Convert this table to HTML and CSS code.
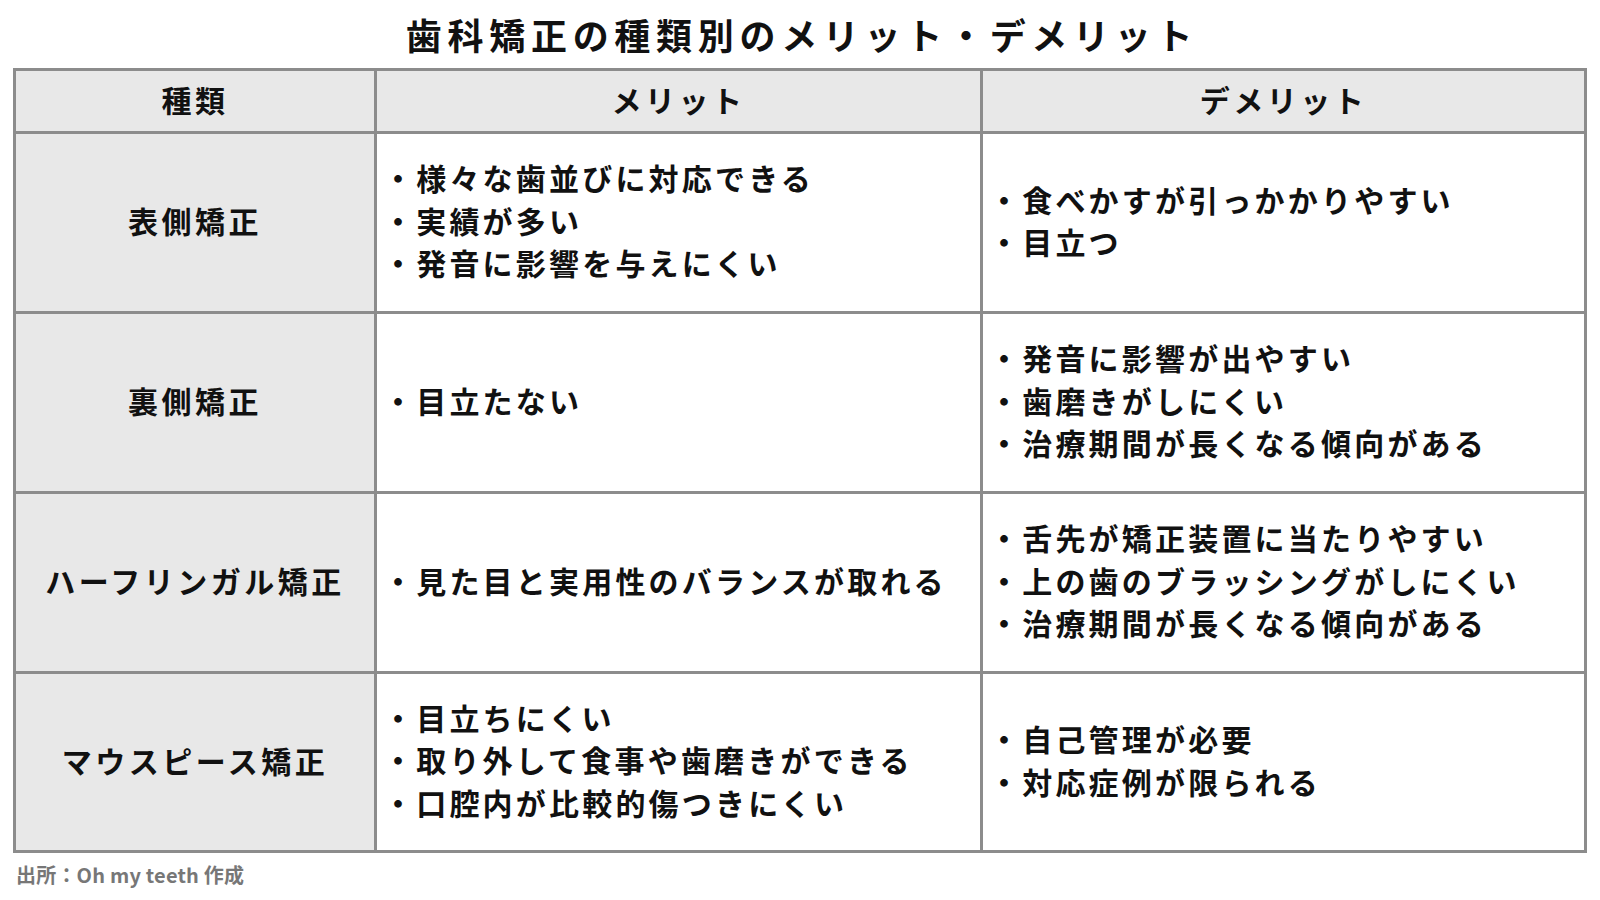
FILE: index.html
```html
<!DOCTYPE html>
<html lang="ja">
<head>
<meta charset="utf-8">
<title>歯科矯正の種類別のメリット・デメリット</title>
<link rel="stylesheet" href="styles.css">
</head>
<body>
<h1 class="title">歯科矯正の種類別のメリット・デメリット</h1>
<div class="table">
  <div class="cell head">種類</div>
  <div class="cell head">メリット</div>
  <div class="cell head">デメリット</div>

  <div class="cell type">表側矯正</div>
  <div class="cell body">
    <p>・様々な歯並びに対応できる</p>
    <p>・実績が多い</p>
    <p>・発音に影響を与えにくい</p>
  </div>
  <div class="cell body">
    <p>・食べかすが引っかかりやすい</p>
    <p>・目立つ</p>
  </div>

  <div class="cell type">裏側矯正</div>
  <div class="cell body">
    <p>・目立たない</p>
  </div>
  <div class="cell body">
    <p>・発音に影響が出やすい</p>
    <p>・歯磨きがしにくい</p>
    <p>・治療期間が長くなる傾向がある</p>
  </div>

  <div class="cell type">ハーフリンガル矯正</div>
  <div class="cell body">
    <p>・見た目と実用性のバランスが取れる</p>
  </div>
  <div class="cell body">
    <p>・舌先が矯正装置に当たりやすい</p>
    <p>・上の歯のブラッシングがしにくい</p>
    <p>・治療期間が長くなる傾向がある</p>
  </div>

  <div class="cell type">マウスピース矯正</div>
  <div class="cell body">
    <p>・目立ちにくい</p>
    <p>・取り外して食事や歯磨きができる</p>
    <p>・口腔内が比較的傷つきにくい</p>
  </div>
  <div class="cell body">
    <p>・自己管理が必要</p>
    <p>・対応症例が限られる</p>
  </div>
</div>
<p class="source">出所：Oh my teeth 作成</p>
</body>
</html>
```

FILE: styles.css
```css
html, body {
  margin: 0;
  padding: 0;
  background: #ffffff;
}

body {
  width: 1600px;
  height: 900px;
  overflow: hidden;
  font-family: "Noto Sans CJK JP", "Noto Sans", sans-serif;
  color: #111111;
}

.title {
  margin: 0;
  height: 68px;
  display: flex;
  align-items: center;
  justify-content: center;
  font-size: 36px;
  font-weight: 700;
  letter-spacing: 5.7px;
  line-height: 1;
  padding-left: 4px;
}

.table {
  margin-left: 13px;
  width: 1574px;
  box-sizing: border-box;
  display: grid;
  grid-template-columns: 358px 603px 601px;
  grid-template-rows: 60px 177px 177px 177px 176px;
  gap: 3px;
  padding: 3px;
  background: #8c8c8c;
}

.cell {
  display: flex;
  flex-direction: column;
  justify-content: center;
  font-weight: 700;
  font-size: 30px;
  letter-spacing: 3.5px;
  padding-bottom: 5px;
}

.head {
  background: #e8e8e8;
  align-items: center;
  text-align: center;
}

.type {
  background: #e8e8e8;
  align-items: center;
  text-align: center;
}

.body {
  background: #ffffff;
  padding-left: 6px;
  letter-spacing: 3.2px;
}

.body p {
  margin: 0;
  line-height: 42.5px;
  white-space: nowrap;
}

.source {
  margin: 10px 0 0 16px;
  font-size: 20px;
  font-weight: 700;
  color: #777777;
  line-height: 24px;
  letter-spacing: 0.2px;
}
```
